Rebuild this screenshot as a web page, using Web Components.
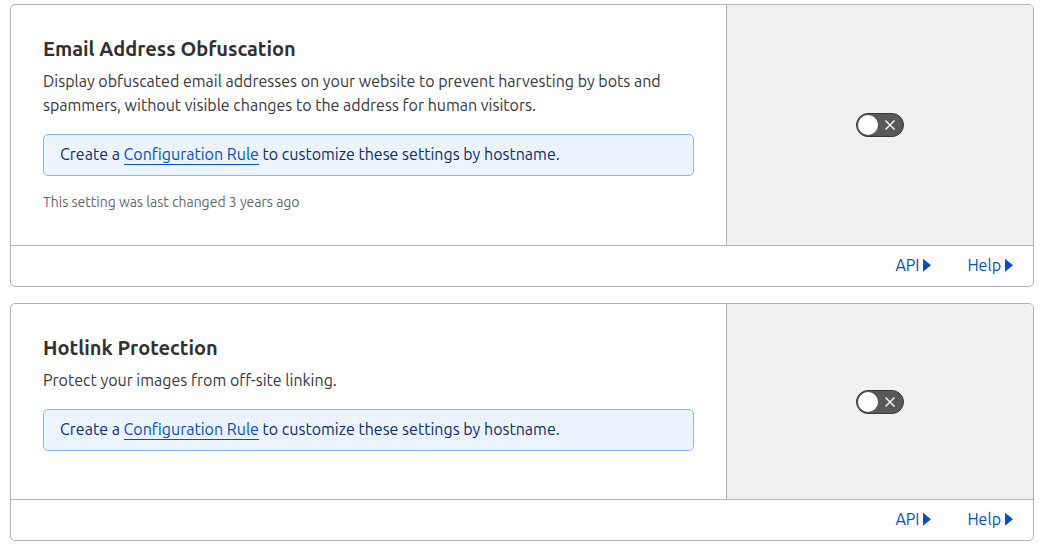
<!DOCTYPE html>
<html lang="en">
<head>
<meta charset="utf-8">
<meta name="viewport" content="width=device-width, initial-scale=1">
<title>Scrape Shield</title>
<style>
body {
  margin: 4px 12px 8px 10px;
  background: #fff;
  color: #36393a;
  font-family: Ubuntu, "Noto Sans", sans-serif;
  font-size: 16px;
  line-height: 24px;
}

main {
  display: grid;
  gap: 16px;
}
</style>
</head>
<body>
<main>
  <setting-card name="Email Address Obfuscation">
    Display obfuscated email addresses on your website to prevent harvesting by bots and spammers, without visible changes to the address for human visitors.
    <rule-notice slot="notice"></rule-notice>
    <span slot="changed">This setting was last changed 3 years ago</span>
  </setting-card>
  <setting-card name="Hotlink Protection">
    Protect your images from off-site linking.
    <rule-notice slot="notice"></rule-notice>
  </setting-card>
</main>

<script>
const noticeTemplate = document.createElement("template");
noticeTemplate.innerHTML = `\
<style>
:host {
  display: block;
  padding: 7px 16px 9px;
  border: 1px solid #82b6ff;
  border-radius: 5px;
  background: #ebf3ff;
  color: #0b2f6b;
  line-height: 24px;
}
a {
  padding-bottom: 1px;
  border-bottom: 1px solid #0051c3;
  color: #0051c3;
  text-decoration: none;
}
</style>
Create a <a href="#rules">Configuration Rule</a> to customize these settings by hostname.
`;

class RuleNotice extends HTMLElement {
  constructor() {
    super();
    this.attachShadow({ mode: "open" });
    this.shadowRoot.appendChild(noticeTemplate.content.cloneNode(true));
  }
}

customElements.define("rule-notice", RuleNotice);

const toggleTemplate = document.createElement("template");
toggleTemplate.innerHTML = `\
<style>
:host {
  display: block;
}
label {
  display: grid;
  align-items: center;
  cursor: pointer;
}
input,
svg {
  grid-area: 1 / 1;
}
input {
  display: flex;
  box-sizing: border-box;
  width: 48px;
  height: 24px;
  margin: 0;
  border: 1px solid #36393a;
  border-radius: 12px;
  appearance: none;
  background: #595959;
  cursor: pointer;
}
input::before {
  content: "";
  width: 20px;
  height: 20px;
  margin: 1px;
  border-radius: 50%;
  background: #fff;
}
input:checked {
  justify-content: flex-end;
  border-color: #2db35e;
  background: #2db35e;
}
input:checked + svg {
  display: none;
}
svg {
  justify-self: end;
  margin-right: 8px;
  pointer-events: none;
}
</style>

<label>
  <input type="checkbox" role="switch">
  <svg width="12" height="12" viewBox="0 0 12 12" aria-hidden="true">
    <path d="M1.5 1.5l9 9M10.5 1.5l-9 9" fill="none" stroke="#fff" stroke-width="1.4"/>
  </svg>
</label>
`;

class ToggleSwitch extends HTMLElement {
  static observedAttributes = ["label"];

  constructor() {
    super();
    this.attachShadow({ mode: "open" });
    this.shadowRoot.appendChild(toggleTemplate.content.cloneNode(true));
    this.input = this.shadowRoot.querySelector("input");
  }

  attributeChangedCallback(name, oldValue, value) {
    this.input.setAttribute("aria-label", value);
  }
}

customElements.define("toggle-switch", ToggleSwitch);

const linkTemplate = document.createElement("template");
linkTemplate.innerHTML = `\
<style>
:host {
  display: block;
}
a {
  display: flex;
  align-items: center;
  gap: 4px;
  color: #0051c3;
  text-decoration: none;
}
</style>

<a>
  <slot></slot>
  <svg width="8" height="14" viewBox="0 0 8 14" aria-hidden="true">
    <path d="M0 .8v13L8 7.3z" fill="currentColor"/>
  </svg>
</a>
`;

class PanelLink extends HTMLElement {
  constructor() {
    super();
    this.attachShadow({ mode: "open" });
    this.shadowRoot.appendChild(linkTemplate.content.cloneNode(true));
  }

  connectedCallback() {
    this.shadowRoot.querySelector("a").href = this.getAttribute("to");
  }
}

customElements.define("panel-link", PanelLink);

const cardTemplate = document.createElement("template");
cardTemplate.innerHTML = `\
<style>
:host {
  display: block;
  overflow: hidden;
  border: 1px solid #b3b3b3;
  border-radius: 5px;
}
.body {
  display: grid;
  grid-template-columns: 7fr 3fr;
}
.text {
  padding: 32px;
}
h2 {
  margin: 0 0 8px;
  color: #313131;
  font-size: 20px;
  font-weight: 600;
  line-height: 24px;
}
p {
  margin: 0 0 17px;
}
slot[name="notice"] {
  display: block;
  margin-bottom: 16px;
}
slot[name="changed"] {
  display: block;
  color: #62676a;
  font-size: 14px;
  line-height: 21px;
}
.control {
  display: flex;
  align-items: center;
  justify-content: center;
  border-left: 1px solid #b3b3b3;
  background: #f1f1f1;
}
footer {
  display: flex;
  justify-content: flex-end;
  gap: 36px;
  padding: 7px 20px 9px;
  border-top: 1px solid #b3b3b3;
}
</style>

<div class="body">
  <div class="text">
    <h2></h2>
    <p><slot></slot></p>
    <slot name="notice"></slot>
    <slot name="changed"></slot>
  </div>
  <div class="control">
    <toggle-switch></toggle-switch>
  </div>
</div>
<footer>
  <panel-link to="#api">API</panel-link>
  <panel-link to="#help">Help</panel-link>
</footer>
`;

class SettingCard extends HTMLElement {
  constructor() {
    super();
    this.attachShadow({ mode: "open" });
    this.shadowRoot.appendChild(cardTemplate.content.cloneNode(true));
  }

  connectedCallback() {
    const name = this.getAttribute("name");
    this.shadowRoot.querySelector("h2").textContent = name;
    this.shadowRoot.querySelector("toggle-switch").setAttribute("label", name);
  }
}

customElements.define("setting-card", SettingCard);
</script>
</body>
</html>
